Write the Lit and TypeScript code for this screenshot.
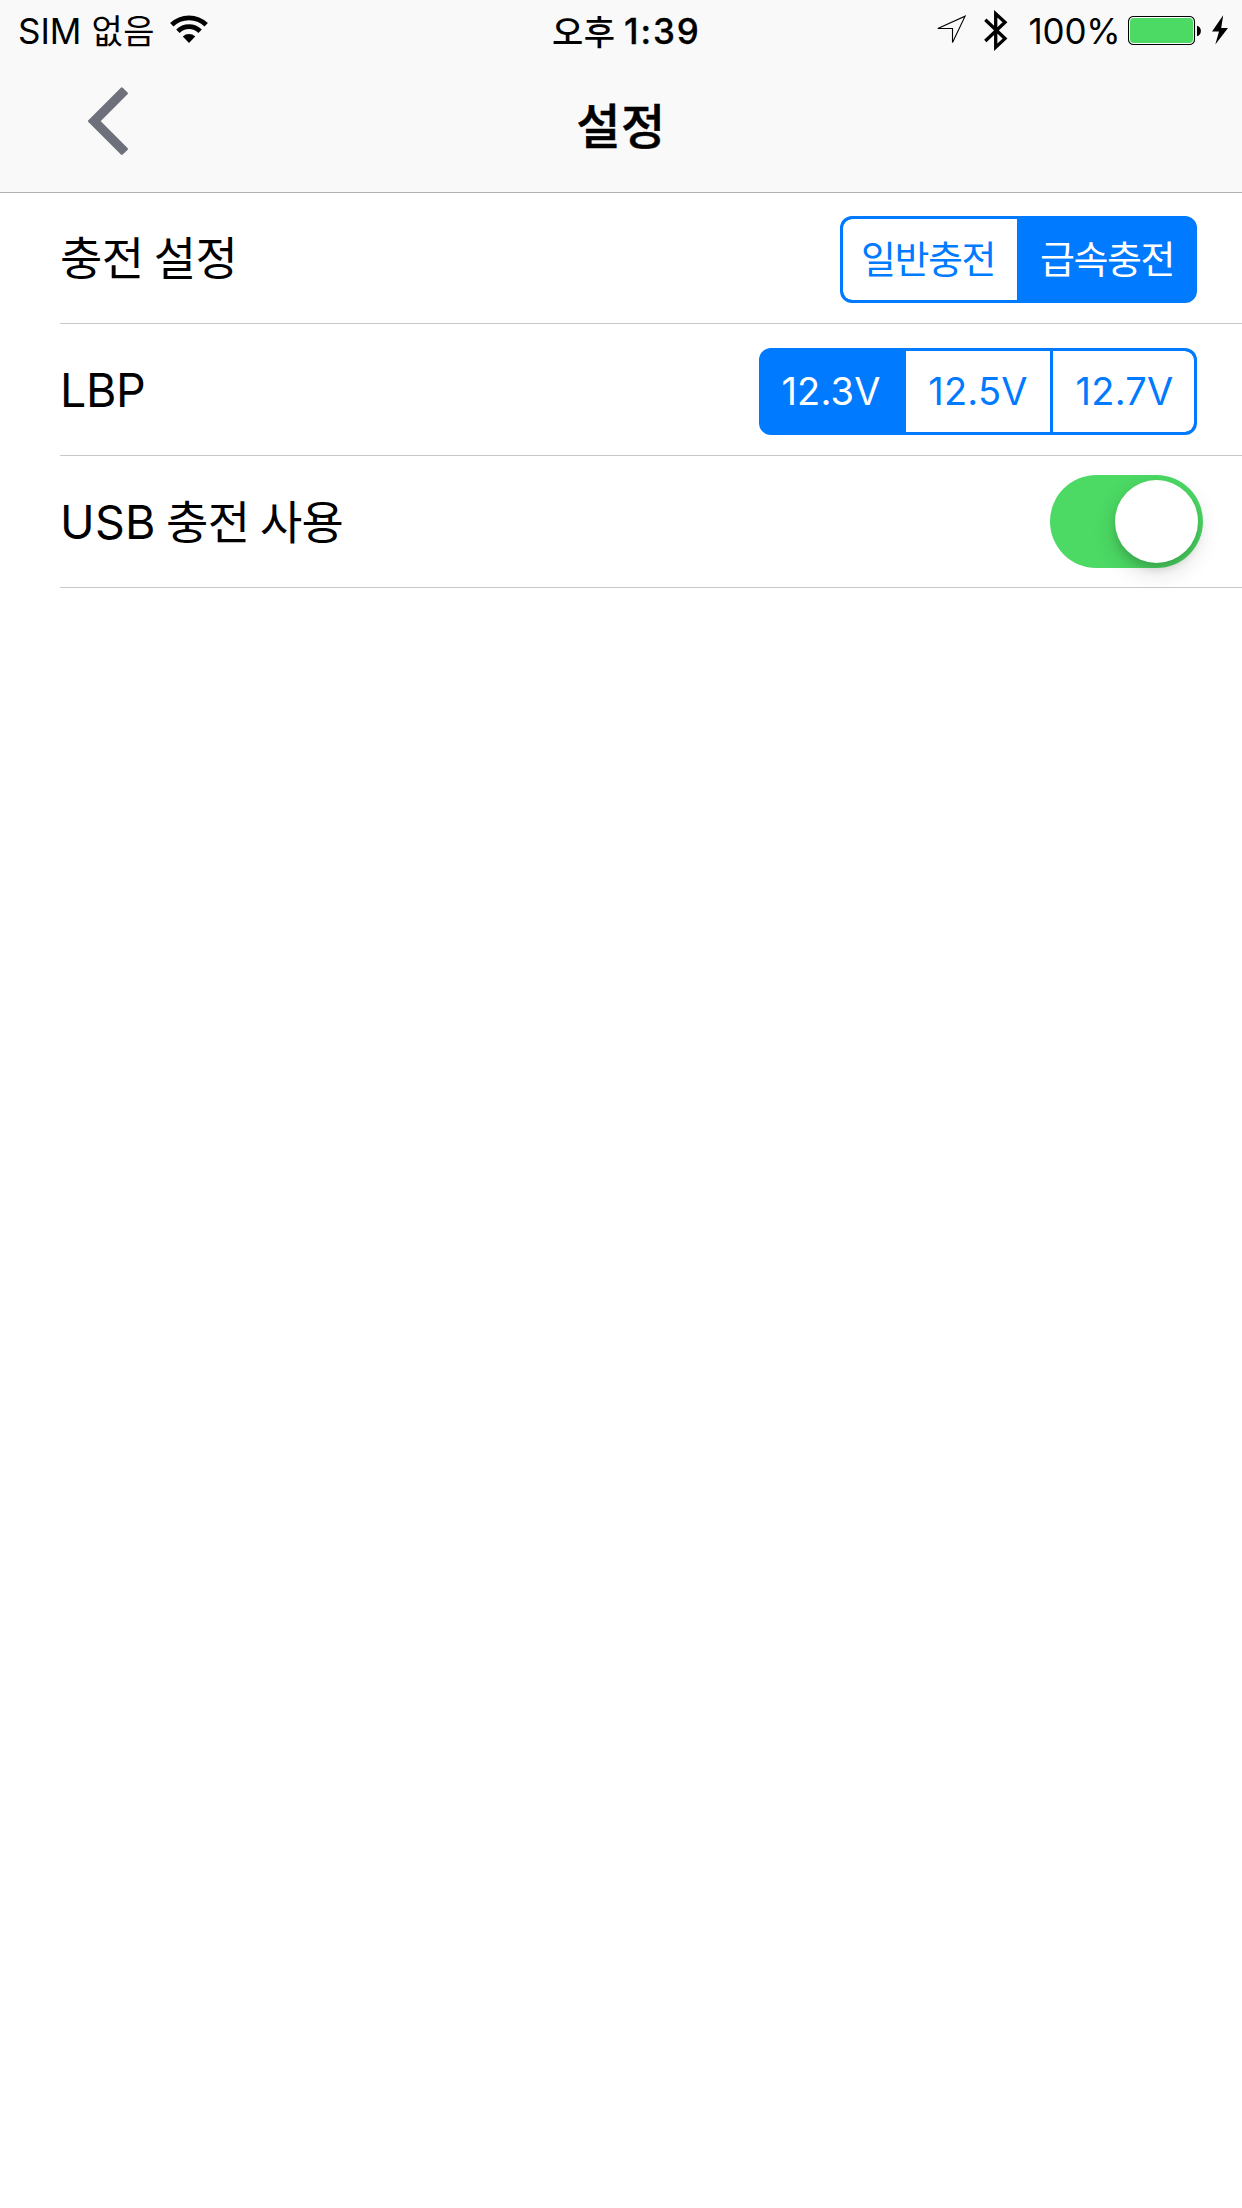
import { LitElement, html, css } from "lit";
import { customElement, property, state } from "lit/decorators.js";
import { classMap } from "lit/directives/class-map.js";

const FONT = css`"Inter", "Noto Sans CJK KR", sans-serif`;

@customElement("status-bar")
class StatusBar extends LitElement {
  static styles = css`
    :host { display: grid; grid-template-columns: 552px 384px 1fr; height: 62px;
      font: 400 35px/62px ${FONT}; color: #000; white-space: nowrap; }
    .group { display: flex; height: 62px; }
    .left { padding-left: 18px; }
    .ko { font-family: "Noto Sans CJK KR", sans-serif; font-size: 34px; letter-spacing: 0.5px; line-height: 60px; }
    .carrier { margin-left: 10px; line-height: 60px; }
    .wifi { margin: 15px 0 0 14px; }
    .ampm { font-weight: 500; line-height: 61px; }
    .time { font-weight: 500; letter-spacing: 1.9px; margin-left: 8.5px; -webkit-text-stroke: 0.3px #000; }
    .location { margin-top: 14px; }
    .bluetooth { margin: 9px 0 0 15px; }
    .percent { width: 93px; margin-left: 19.5px; letter-spacing: -0.2px; }
    .battery { margin: 16px 0 0 6.5px; }
    .bolt { margin: 15px 0 0 7px; }
    svg { display: block; flex: none; }
  `;
  render() {
    return html`
      <div class="group left">
        <span>SIM</span><span class="ko carrier">없음</span>
        <svg class="wifi" width="40" height="30" viewBox="0 0 40 30">
          <g fill="none" stroke="#000" stroke-width="4.8">
            <path d="M2.8 9.8A24.6 24.6 0 0 1 37.2 9.8" />
            <path d="M8.9 16.3A15.7 15.7 0 0 1 31.1 16.3" />
          </g>
          <path d="M20 28L13.8 21.4A9 9 0 0 1 26.2 21.4Z" />
        </svg>
      </div>
      <div class="group"><span class="ko ampm">오후</span><span class="time">1:39</span></div>
      <div class="group">
        <svg class="location" width="32" height="32" viewBox="0 0 32 32">
          <path d="M1.8 14.5L29.1 2.2L16.5 28.5V14.5Z" fill="none" stroke="#000" stroke-width="1.1" />
        </svg>
        <svg class="bluetooth" width="26" height="44" viewBox="0 0 26 44">
          <path d="M2.3 10.8L22 29.6L12.7 38.2V4.8L22 13.2L2.3 32" fill="none" stroke="#000" stroke-width="3.3" stroke-miterlimit="10" />
        </svg>
        <span class="percent">100%</span>
        <svg class="battery" width="76" height="30" viewBox="0 0 76 30">
          <rect x="0.5" y="0.5" width="66" height="28" rx="5" fill="#fff" stroke="#000" stroke-width="1.1" />
          <rect x="2" y="2" width="63" height="25" rx="3.8" fill="#4cd964" />
          <path d="M69 9.8C74.2 11 74.2 19 69 20.2Z" />
        </svg>
        <svg class="bolt" width="18" height="32" viewBox="0 0 18 32">
          <path d="M12.2 0.3L1 16.5H8L4.3 29.4L17 13H10.2Z" />
        </svg>
      </div>`;
  }
}

@customElement("nav-bar")
class NavBar extends LitElement {
  @property() heading = "";
  static styles = css`
    :host { display: grid; grid-template-columns: 240px 1fr 240px; height: 130px; }
    .back { margin: 0; padding: 25px 0 0 88px; border: 0; background: none; text-align: left; height: 94px; }
    .back svg { display: block; }
    .title { margin: 0; text-align: center; color: #000; -webkit-text-stroke: 0.5px #000;
      font: 500 48px/122px "Noto Sans CJK KR", sans-serif; letter-spacing: 0.5px; }
  `;
  render() {
    return html`
      <button class="back">
        <svg width="41" height="69" viewBox="0 0 41 69">
          <path d="M1.3 34.2L33.8 1.6L38.6 6.4L10.9 34.2L38.6 62L33.8 66.6Z" fill="#6e717b" stroke="#6e717b" stroke-width="2.6" stroke-linejoin="round" />
        </svg>
      </button>
      <h1 class="title">${this.heading}</h1>`;
  }
}

@customElement("segmented-control")
class SegmentedControl extends LitElement {
  @property({ attribute: false }) options: string[] = [];
  @property({ type: Number }) selected = 0;
  static styles = css`
    :host { display: block; }
    .box { display: grid; height: 87px; box-sizing: border-box; border: 3px solid #007aff;
      border-radius: 12px; overflow: hidden; background: #007aff; }
    .two { grid-template-columns: 174px 177px; letter-spacing: -1.4px; }
    .three { grid-template-columns: 141px 147px 144px; letter-spacing: 0.2px; }
    .cell { height: 81px; line-height: 80px; font-size: 38px; text-align: center; color: #007aff;
      background: #fff; font-family: ${FONT}; white-space: nowrap; }
    .cell + .cell { border-left: 3px solid #007aff; }
    .two .cell:first-child { padding-right: 4px; }
    .three .cell:first-child { padding-right: 3px; }
    .three .cell:last-child { padding-left: 2px; }
    .cell.on { background: #007aff; color: #fff; }
    .cell:first-child { border-radius: 9px 0 0 9px; }
    .cell:last-child { border-radius: 0 9px 9px 0; }
  `;
  render() {
    const n = this.options.length;
    return html`<div class=${classMap({ box: true, two: n === 2, three: n === 3 })}>
      ${this.options.map((o, i) => html`<div class=${classMap({ cell: true, on: i === this.selected })}
        @click=${() => { this.selected = i; }}>${o}</div>`)}
    </div>`;
  }
}

@customElement("toggle-switch")
class ToggleSwitch extends LitElement {
  @property({ type: Boolean }) on = false;
  static styles = css`
    :host { display: block; }
    .track { display: flex; width: 153px; height: 93px; box-sizing: border-box; padding: 5px;
      border-radius: 47px; background: #e5e5e5; }
    .track.on { background: #4cd964; justify-content: flex-end; }
    .knob { width: 83px; height: 83px; border-radius: 50%; background: #fff;
      box-shadow: 0 9px 24px rgba(0, 0, 0, 0.14), 0 6px 8px rgba(0, 0, 0, 0.13); }
  `;
  render() {
    return html`<div class=${classMap({ track: true, on: this.on })}
      @click=${() => { this.on = !this.on; }}><div class="knob"></div></div>`;
  }
}

@customElement("app-root")
class AppRoot extends LitElement {
  @state() private usb = true;
  static styles = css`
    :host { display: block; min-height: 2208px; background: #fff; }
    .header { display: block; height: 193px; box-sizing: border-box; background: #f9f9f9; border-bottom: 1px solid #b2b2b2; }
    .list { margin-top: -1px; padding-left: 60px; }
    .row { display: flex; justify-content: space-between; align-items: flex-start; height: 132px;
      box-sizing: border-box; border-bottom: 1px solid #c8c7cc; padding-right: 45px; }
    .label { font: 400 46.5px/132px ${FONT}; color: #000; white-space: nowrap; letter-spacing: -0.3px; }
    .ko { font-size: 46px; line-height: 0; letter-spacing: -0.6px; word-spacing: -2px; }
    .usb { letter-spacing: 0.3px; }
    .seg { margin-top: 24px; }
    .switch { margin: 19px -6px 0 0; }
  `;
  render() {
    return html`
      <header class="header">
        <status-bar></status-bar>
        <nav-bar heading="설정"></nav-bar>
      </header>
      <main class="list">
        <div class="row">
          <span class="label"><span class="ko">충전 설정</span></span>
          <segmented-control class="seg" .options=${["일반충전", "급속충전"]} .selected=${1}></segmented-control>
        </div>
        <div class="row">
          <span class="label">LBP</span>
          <segmented-control class="seg" .options=${["12.3V", "12.5V", "12.7V"]} .selected=${0}></segmented-control>
        </div>
        <div class="row">
          <span class="label"><span class="usb">USB</span><span class="ko"> 충전 사용</span></span>
          <toggle-switch class="switch" ?on=${this.usb}></toggle-switch>
        </div>
      </main>`;
  }
}
